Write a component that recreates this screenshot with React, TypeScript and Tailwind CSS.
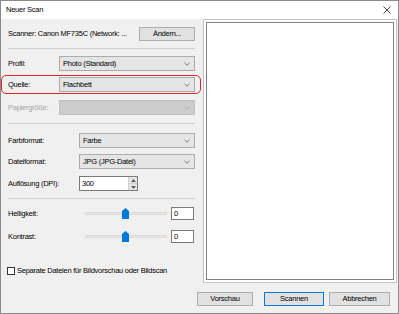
import React from 'react';

const Chevron = ({ disabled }: { disabled?: boolean }) => (
  <svg width="6" height="4" viewBox="0 0 6 4" className="shrink-0">
    <polyline points="0.5,0.8 3,3.2 5.5,0.8" fill="none" stroke={disabled ? '#b0b0b0' : '#707070'} strokeWidth="0.9" />
  </svg>
);

const Combo = ({ value, disabled }: { value?: string; disabled?: boolean }) => (
  <div
    className={`flex-1 h-[15px] flex items-center justify-between pl-[3px] pr-[4px] border ${
      disabled ? 'bg-[#cccccc] border-[#bfbfbf]' : 'bg-[#e5e5e5] border-[#acacac]'
    }`}
  >
    <span>{value}</span>
    <Chevron disabled={disabled} />
  </div>
);

const Slider = () => (
  <div className="relative w-[82px] h-[11px] ml-[6px] flex items-center">
    <div className="w-full h-[3px] bg-[#e7e7e7] border border-[#dadada]" />
    <svg width="7" height="11" viewBox="0 0 7 11" className="absolute left-[37px] top-0">
      <polygon points="0,3 3.5,0 7,3 7,11 0,11" fill="#0078d7" />
    </svg>
  </div>
);

const Button = ({ label, w, primary }: { label: string; w: string; primary?: boolean }) => (
  <div
    className={`${w} h-[14px] flex items-center justify-center bg-[#e1e1e1] border ${
      primary ? 'border-[#0078d7]' : 'border-[#adadad]'
    }`}
  >
    {label}
  </div>
);

export default function App() {
  return (
    <div
      className="w-[399px] h-[314px] border border-[#8a8a8a] bg-[#f0f0f0] flex flex-col text-[7.5px] tracking-[-0.25px] text-black leading-none whitespace-nowrap"
      style={{ fontFamily: '"Liberation Sans", Arial, sans-serif' }}
    >
      <div className="h-[18px] bg-white flex items-center justify-between pl-[5px] pr-[7px]">
        <span>Neuer Scan</span>
        <svg width="8" height="8" viewBox="0 0 8 8">
          <path d="M0.5 0.5 L7.5 7.5 M7.5 0.5 L0.5 7.5" stroke="#444" strokeWidth="1" />
        </svg>
      </div>

      <div className="flex h-[264px]">
        <div className="w-[200px] pl-[7px] pr-[6px] flex flex-col">
          <div className="mt-[8px] h-[14px] flex items-center justify-between">
            <span>Scanner: Canon MF735C (Network: ...</span>
            <Button label="Ändern..." w="w-[56px]" />
          </div>
          <div className="mt-[7px] h-px bg-[#d0d0d0]" />

          <div className="mt-[7px] flex items-center">
            <span className="w-[51px]">Profil:</span>
            <Combo value="Photo (Standard)" />
          </div>
          <div className="relative mt-[6px] flex items-center">
            <span className="w-[51px]">Quelle:</span>
            <Combo value="Flachbett" />
            <span className="absolute -left-[7px] -right-[6px] -top-[2px] -bottom-[2px] border-[1.5px] border-[#e3262b] rounded-[5px]" />
          </div>
          <div className="mt-[8px] flex items-center">
            <span className="w-[51px] text-[#a6a6a6]">Papiergröße:</span>
            <Combo disabled />
          </div>
          <div className="mt-[8px] h-px bg-[#d0d0d0]" />

          <div className="mt-[9px] flex items-center">
            <span className="w-[71px]">Farbformat:</span>
            <Combo value="Farbe" />
          </div>
          <div className="mt-[6px] flex items-center">
            <span className="w-[71px]">Dateiformat:</span>
            <Combo value="JPG (JPG-Datei)" />
          </div>
          <div className="mt-[7px] flex items-center">
            <span className="w-[71px]">Auflösung (DPI):</span>
            <div className="w-[59px] h-[15px] bg-white border border-[#7a7a7a] flex">
              <span className="flex-1 pl-[2px] flex items-center">300</span>
              <div className="w-[9px] flex flex-col border-l border-[#d0d0d0]">
                <div className="flex-1 bg-[#e5e5e5] flex items-center justify-center border-b border-[#d0d0d0]">
                  <svg width="5" height="3" viewBox="0 0 5 3"><polygon points="0,3 2.5,0 5,3" fill="#606060" /></svg>
                </div>
                <div className="flex-1 bg-[#e5e5e5] flex items-center justify-center">
                  <svg width="5" height="3" viewBox="0 0 5 3"><polygon points="0,0 2.5,3 5,0" fill="#606060" /></svg>
                </div>
              </div>
            </div>
          </div>
          <div className="mt-[7px] h-px bg-[#d0d0d0]" />

          <div className="mt-[8px] flex items-center">
            <span className="w-[71px]">Helligkeit:</span>
            <Slider />
            <div className="ml-[4px] w-[23px] h-[13px] bg-white border border-[#7a7a7a] pl-[2px] flex items-center">0</div>
          </div>
          <div className="mt-[10px] flex items-center">
            <span className="w-[71px]">Kontrast:</span>
            <Slider />
            <div className="ml-[4px] w-[23px] h-[13px] bg-white border border-[#7a7a7a] pl-[2px] flex items-center">0</div>
          </div>

          <div className="mt-[24px] -ml-px flex items-center gap-[2px]">
            <div className="w-[8px] h-[8px] bg-white border border-[#333333]" />
            <span>Separate Dateien für Bildvorschau oder Bildscan</span>
          </div>
        </div>

        <div className="w-[196px] pl-[2px]">
          <div className="h-full bg-white border border-[#c4c4c4] p-[2px]">
            <div className="h-full bg-white border border-[#828282]" />
          </div>
        </div>
      </div>

      <div className="mt-[9px] flex justify-end pr-[8px]">
        <Button label="Vorschau" w="w-[56px]" />
        <div className="w-[11px]" />
        <Button label="Scannen" w="w-[60px]" primary />
        <div className="w-[5px]" />
        <Button label="Abbrechen" w="w-[61px]" />
      </div>
    </div>
  );
}
